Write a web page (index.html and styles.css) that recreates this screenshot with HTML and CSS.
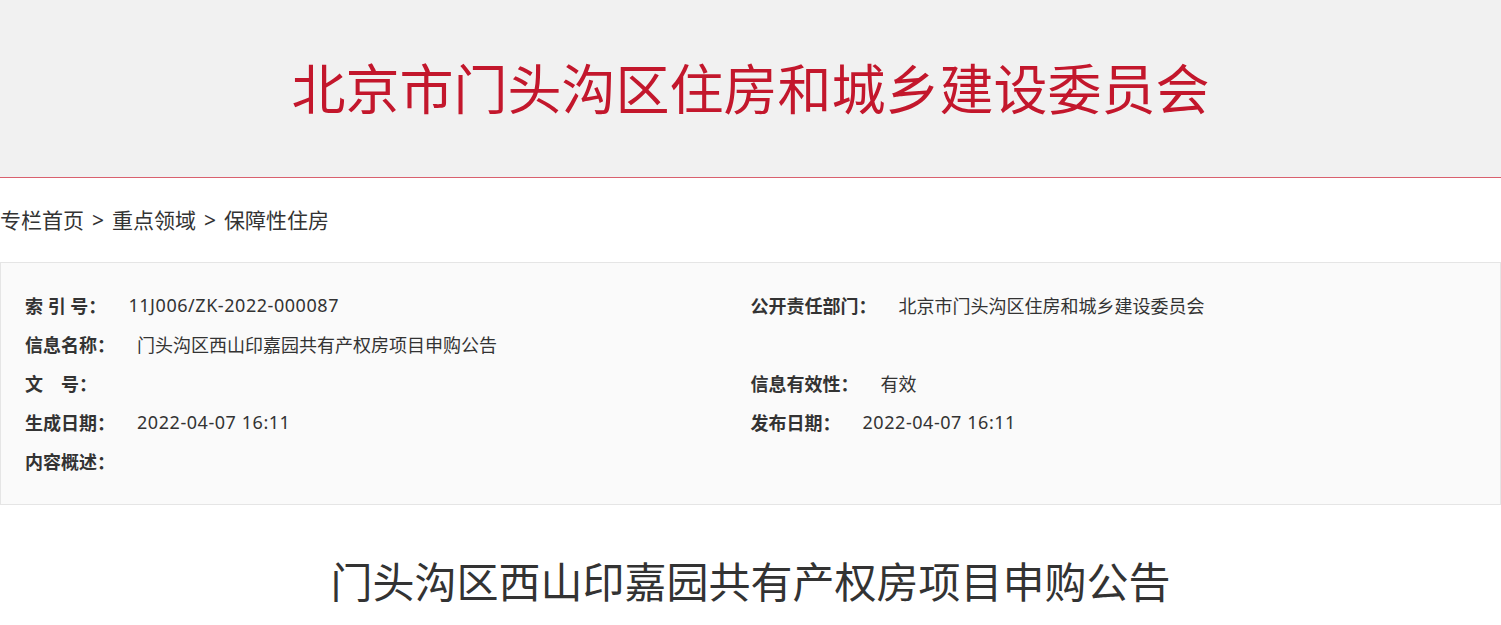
FILE: index.html
```html
<!DOCTYPE html>
<html lang="zh-CN">
<head>
<meta charset="utf-8">
<title>门头沟区西山印嘉园共有产权房项目申购公告</title>
<link rel="stylesheet" href="styles.css">
</head>
<body>
<header class="site-header">
  <h1 class="site-title">北京市门头沟区住房和城乡建设委员会</h1>
</header>
<nav class="crumbs">
  <a href="#">专栏首页</a><span class="sep">&gt;</span><a href="#">重点领域</a><span class="sep">&gt;</span><a href="#">保障性住房</a>
</nav>
<section class="meta">
  <div class="meta-item"><span class="label">索 引 号：</span><span class="value num">11J006/ZK-2022-000087</span></div>
  <div class="meta-item"><span class="label">公开责任部门：</span><span class="value">北京市门头沟区住房和城乡建设委员会</span></div>
  <div class="meta-item"><span class="label">信息名称：</span><span class="value">门头沟区西山印嘉园共有产权房项目申购公告</span></div>
  <div class="meta-item"></div>
  <div class="meta-item"><span class="label">文　号：</span><span class="value"></span></div>
  <div class="meta-item"><span class="label">信息有效性：</span><span class="value">有效</span></div>
  <div class="meta-item"><span class="label">生成日期：</span><span class="value num">2022-04-07 16:11</span></div>
  <div class="meta-item"><span class="label">发布日期：</span><span class="value num">2022-04-07 16:11</span></div>
  <div class="meta-item meta-full"><span class="label">内容概述：</span><span class="value"></span></div>
</section>
<h2 class="article-title">门头沟区西山印嘉园共有产权房项目申购公告</h2>
</body>
</html>
```
FILE: styles.css
```css
html, body {
  margin: 0;
  padding: 0;
  overflow: hidden;
  background: #ffffff;
}
body {
  font-family: "Noto Sans", "Noto Sans CJK SC", sans-serif;
  color: #333333;
}
.site-header {
  height: 177px;
  background: #f1f1f1;
  border-bottom: 1px solid #d9606e;
  display: flex;
  align-items: center;
  justify-content: center;
}
.site-title {
  margin: 0;
  font-size: 54px;
  line-height: 64px;
  font-weight: normal;
  color: #c3172c;
}
.crumbs {
  margin-top: 27px;
  height: 30px;
  line-height: 30px;
  font-size: 21px;
  color: #333333;
  white-space: nowrap;
}
.crumbs a {
  color: #333333;
  text-decoration: none;
}
.crumbs .sep {
  margin: 0 8px;
}
.meta {
  margin-top: 27px;
  border: 1px solid #e5e5e5;
  background: #fafafa;
  padding: 22px 24px 24px;
  display: grid;
  grid-template-columns: 1fr 1fr;
  grid-auto-rows: 39px;
  font-size: 18px;
}
.meta-item {
  display: flex;
  align-items: center;
  white-space: nowrap;
}
.meta-full {
  grid-column: 1 / -1;
}
.label {
  font-weight: bold;
  color: #333333;
}
.value {
  margin-left: 22px;
  color: #333333;
}
.value.num {
  letter-spacing: 0.55px;
}
.article-title {
  margin: 47px 0 0;
  text-align: center;
  font-size: 42px;
  line-height: 60px;
  font-weight: normal;
  color: #333333;
}
```
